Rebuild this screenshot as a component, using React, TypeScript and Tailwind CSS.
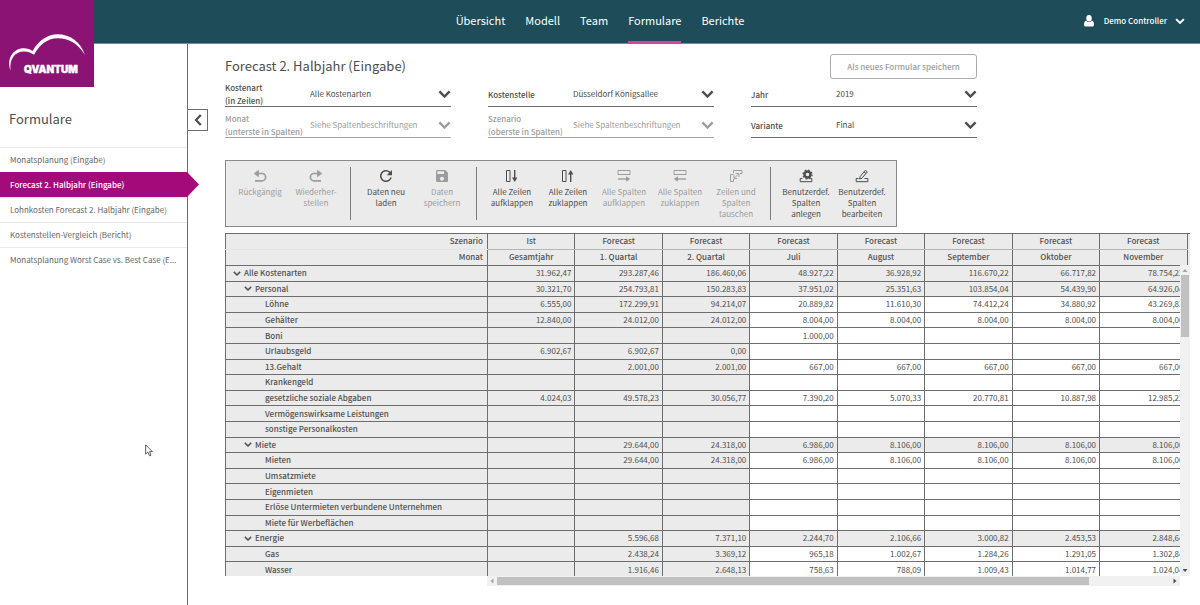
import React from 'react';
import { MdRefresh, MdSave } from 'react-icons/md';

type Chevron = { className?: string; width?: number };

function ChevronDown({ className = '', width = 2.6 }: Chevron) {
  return (
    <svg viewBox="0 0 14 9" className={className} fill="none" stroke="currentColor" strokeWidth={width} aria-hidden="true">
      <path d="M1.500 1.500 L7 7 L12.500 1.500" />
    </svg>
  );
}

function Logo() {
  return (
    <a href="#" aria-label="QVANTUM" className="relative z-10 block h-[87px] w-[94px] shrink-0 bg-[#8a1373]">
      <svg viewBox="0 0 94 87" className="h-full w-full" aria-hidden="true">
        <path
          fill="#fff"
          d="M10.500 70.500 C6 58 14 48 24 48.300 C27.500 48.400 30 49.300 32.500 51 C39 40 48 34.300 57.500 34.300 C70 34.300 81 42 84.800 54.800 C78 43.500 68.500 38.500 58 38.300 C48 38.200 40 44 34 54.800 C30 52.500 27.500 51.500 24 51.600 C14.500 51.700 9.500 59 10.500 70.500 Z"
        />
        <text
          x="51"
          y="73"
          fill="#fff"
          stroke="#fff"
          strokeWidth="0.400"
          textAnchor="middle"
          fontFamily="Inter, sans-serif"
          fontWeight="900"
          fontSize="10"
        >
          QVANTUM
        </text>
      </svg>
    </a>
  );
}

const navItems = ['Übersicht', 'Modell', 'Team', 'Formulare', 'Berichte'];

function Header() {
  return (
    <header className="grid h-11 grid-cols-[1fr_auto_1fr] border-b border-[#6f8f98] bg-[#1e4c59] text-white">
      <Logo />
      <nav className="flex gap-5 text-[11px] leading-[41px]">
        {navItems.map((item) => (
          <a
            key={item}
            href="#"
            className={
              item === 'Formulare' ? 'h-11 border-b-3 border-[#c9499c]' : 'h-11 border-b-3 border-transparent'
            }
          >
            {item}
          </a>
        ))}
      </nav>
      <button type="button" className="flex h-[42px] items-center justify-self-end pr-[15px] text-[8px] font-medium">
        <svg viewBox="0 0 10 12" className="mr-2.5 h-3 w-2.5" fill="currentColor" aria-hidden="true">
          <ellipse cx="5" cy="3.300" rx="2.700" ry="3.200" />
          <path d="M2.300 5.600 C3.500 7.600 6.500 7.600 7.700 5.600 C9.300 6.200 10 7.500 10 9.500 C10 11 9.300 11.500 8.300 11.500 H1.700 C0.700 11.500 0 11 0 9.500 C0 7.500 0.700 6.200 2.300 5.600 Z" />
        </svg>
        Demo Controller
        <ChevronDown className="ml-2 w-2.5" />
      </button>
    </header>
  );
}

const forms = [
  'Monatsplanung (Eingabe)',
  'Forecast 2. Halbjahr (Eingabe)',
  'Lohnkosten Forecast 2. Halbjahr (Eingabe)',
  'Kostenstellen-Vergleich (Bericht)',
  'Monatsplanung Worst Case vs. Best Case (E...',
];

function Sidebar() {
  return (
    <aside className="w-[188px] shrink-0 border-r border-[#6e6e6e] pt-[63px]">
      <h2 className="pb-4 pl-[9px] text-[13px] leading-6 text-[#4d4d4d]">Formulare</h2>
      <ul className="text-[8px] leading-6">
        {forms.map((form, i) =>
          i === 1 ? (
            <li key={form} className="relative h-[25px] bg-[#a30b7b] pl-2.5 font-medium text-white">
              <a href="#" aria-current="page" className="block leading-[25px]">
                {form}
              </a>
              <svg viewBox="0 0 12 25" className="absolute top-0 left-full h-[25px] w-3" aria-hidden="true">
                <path d="M0 0 L12 12.500 L0 25 Z" fill="#a30b7b" />
              </svg>
            </li>
          ) : (
            <li key={form} className="h-[25px] border-t border-[#e9e9e9] pl-2.5 text-[#666]">
              <a href="#" className="block whitespace-nowrap">
                {form}
              </a>
            </li>
          ),
        )}
      </ul>
    </aside>
  );
}

type Filter = { id: string; label: string; note?: string; value: string; disabled?: boolean };

const filters: Filter[] = [
  { id: 'kostenart', label: 'Kostenart', note: '(in Zeilen)', value: 'Alle Kostenarten' },
  { id: 'kostenstelle', label: 'Kostenstelle', value: 'Düsseldorf Königsallee' },
  { id: 'jahr', label: 'Jahr', value: '2019' },
  { id: 'monat', label: 'Monat', note: '(unterste in Spalten)', value: 'Siehe Spaltenbeschriftungen', disabled: true },
  { id: 'szenario', label: 'Szenario', note: '(oberste in Spalten)', value: 'Siehe Spaltenbeschriftungen', disabled: true },
  { id: 'variante', label: 'Variante', value: 'Final' },
];

function FilterField({ id, label, note, value, disabled }: Filter) {
  return (
    <div
      className={
        disabled
          ? 'relative flex h-[25px] items-center border-b border-[#a5a5a5] text-[#9c9c9c]'
          : 'relative flex h-[25px] items-center border-b border-[#6e6e6e] text-[#4d4d4d]'
      }
    >
      <label htmlFor={id} className="w-[85px] shrink-0 text-[8px] leading-[13px] font-medium">
        {label}
        {note && <span className="block whitespace-nowrap">{note}</span>}
      </label>
      <select
        id={id}
        disabled={disabled}
        defaultValue={value}
        className="h-5 min-w-0 flex-1 appearance-none bg-transparent text-[8px] opacity-100"
      >
        <option>{value}</option>
      </select>
      <ChevronDown className="pointer-events-none absolute right-0 w-[13px]" />
    </div>
  );
}

type Tool = { lines: string[]; icon: React.ReactNode; disabled?: boolean };

function Svg({ children }: { children: React.ReactNode }) {
  return (
    <svg viewBox="0 0 14 14" className="h-3.5 w-3.5" fill="none" stroke="currentColor" strokeWidth="1" aria-hidden="true">
      {children}
    </svg>
  );
}

const toolGroups: Tool[][] = [
  [
    {
      lines: ['Rückgängig'],
      disabled: true,
      icon: (
        <Svg>
          <path d="M4 4.500 H9 A3.600 3.600 0 0 1 9 11.800 H2" strokeWidth="1.700" />
          <path d="M5.800 0.800 V8.200 L0.800 4.500 Z" fill="currentColor" stroke="none" />
        </Svg>
      ),
    },
    {
      lines: ['Wiederher-', 'stellen'],
      disabled: true,
      icon: (
        <Svg>
          <path d="M10 4.500 H5 A3.600 3.600 0 0 0 5 11.800 H12" strokeWidth="1.700" />
          <path d="M8.200 0.800 V8.200 L13.200 4.500 Z" fill="currentColor" stroke="none" />
        </Svg>
      ),
    },
  ],
  [
    { lines: ['Daten neu', 'laden'], icon: <MdRefresh className="-m-0.5 h-[18px] w-[18px]" /> },
    { lines: ['Daten', 'speichern'], disabled: true, icon: <MdSave className="-m-px h-4 w-4" /> },
  ],
  [
    {
      lines: ['Alle Zeilen', 'aufklappen'],
      icon: (
        <Svg>
          <path d="M1.500 1.500 H5 V12.500 H1.500 Z" />
          <path d="M9.700 1 V10" strokeWidth="1.400" />
          <path d="M7 8.500 H12.400 L9.700 13 Z" fill="currentColor" stroke="none" />
        </Svg>
      ),
    },
    {
      lines: ['Alle Zeilen', 'zuklappen'],
      icon: (
        <Svg>
          <path d="M1.500 1.500 H5 V12.500 H1.500 Z" />
          <path d="M9.700 4 V13" strokeWidth="1.400" />
          <path d="M7 5.500 H12.400 L9.700 1 Z" fill="currentColor" stroke="none" />
        </Svg>
      ),
    },
    {
      lines: ['Alle Spalten', 'aufklappen'],
      disabled: true,
      icon: (
        <Svg>
          <path d="M1 1.500 H13 V5.500 H1 Z" />
          <path d="M1 10 H10" strokeWidth="1.400" />
          <path d="M9 7.300 V12.700 L13.300 10 Z" fill="currentColor" stroke="none" />
        </Svg>
      ),
    },
    {
      lines: ['Alle Spalten', 'zuklappen'],
      disabled: true,
      icon: (
        <Svg>
          <path d="M1 1.500 H13 V5.500 H1 Z" />
          <path d="M4 10 H13" strokeWidth="1.400" />
          <path d="M5 7.300 V12.700 L0.700 10 Z" fill="currentColor" stroke="none" />
        </Svg>
      ),
    },
    {
      lines: ['Zeilen und', 'Spalten', 'tauschen'],
      disabled: true,
      icon: (
        <Svg>
          <path d="M4.500 4 V1.500 H13 V4.500 H11 M1.500 5.500 H4.500 M1.500 5.500 V12.500 H4.500 V10" />
          <path d="M5.500 9 L9.500 5 M6.500 4.500 H10 V8 M5 6 V9.500 H8" strokeWidth="0.900" />
        </Svg>
      ),
    },
  ],
  [
    {
      lines: ['Benutzerdef.', 'Spalten', 'anlegen'],
      icon: (
        <Svg>
          <path d="M3.500 9.500 H1.200 V12.700 H12.800 V9.500 H11.500" />
          <circle cx="8.500" cy="5.500" r="3" strokeWidth="2.400" />
          <circle cx="8.500" cy="5.500" r="4.500" strokeWidth="1.200" strokeDasharray="1.770 1.764" />
        </Svg>
      ),
    },
    {
      lines: ['Benutzerdef.', 'Spalten', 'bearbeiten'],
      icon: (
        <Svg>
          <path d="M3.500 9.500 H1.200 V12.700 H12.800 V9.500 H9.500" />
          <path d="M4.500 10 L5.200 7.500 L10.300 1.300 L12.300 2.900 L7 9.200 Z M9 3 L11 4.600" />
        </Svg>
      ),
    },
  ],
];

function Toolbar() {
  return (
    <div
      role="toolbar"
      aria-label="Formular"
      className="mt-[22px] flex h-[67px] w-fit border border-[#8a8a8a] bg-[#ebebeb] px-1.5 py-1.5"
    >
      {toolGroups.map((group, g) => (
        <div key={g} className={g === 0 ? 'flex' : 'ml-1.5 flex border-l border-[#7d7d7d] pl-[7px]'}>
          {group.map((tool) => (
            <button
              key={tool.lines.join(' ')}
              type="button"
              disabled={tool.disabled}
              className={
                tool.disabled
                  ? 'flex w-14 flex-col items-center pt-0.5 text-[8px] leading-[11px] text-[#9c9c9c]'
                  : 'flex w-14 flex-col items-center pt-0.5 text-[8px] leading-[11px] text-[#4d4d4d]'
              }
            >
              {tool.icon}
              <span className="mt-[3px]">
                {tool.lines.map((line) => (
                  <span key={line} className="block whitespace-nowrap">
                    {line}
                  </span>
                ))}
              </span>
            </button>
          ))}
        </div>
      ))}
    </div>
  );
}

const columns = [
  ['Ist', 'Gesamtjahr'],
  ['Forecast', '1. Quartal'],
  ['Forecast', '2. Quartal'],
  ['Forecast', 'Juli'],
  ['Forecast', 'August'],
  ['Forecast', 'September'],
  ['Forecast', 'Oktober'],
  ['Forecast', 'November'],
];

type Row = { name: string; level: 0 | 1 | 2; values: string[] };

const rows: Row[] = [
  { name: 'Alle Kostenarten', level: 0, values: ['31.962,47', '293.287,46', '186.460,06', '48.927,22', '36.928,92', '116.670,22', '66.717,82', '78.754,22'] },
  { name: 'Personal', level: 1, values: ['30.321,70', '254.793,81', '150.283,83', '37.951,02', '25.351,63', '103.854,04', '54.439,90', '64.926,04'] },
  { name: 'Löhne', level: 2, values: ['6.555,00', '172.299,91', '94.214,07', '20.889,82', '11.610,30', '74.412,24', '34.880,92', '43.269,82'] },
  { name: 'Gehälter', level: 2, values: ['12.840,00', '24.012,00', '24.012,00', '8.004,00', '8.004,00', '8.004,00', '8.004,00', '8.004,00'] },
  { name: 'Boni', level: 2, values: ['', '', '', '1.000,00', '', '', '', ''] },
  { name: 'Urlaubsgeld', level: 2, values: ['6.902,67', '6.902,67', '0,00', '', '', '', '', ''] },
  { name: '13.Gehalt', level: 2, values: ['', '2.001,00', '2.001,00', '667,00', '667,00', '667,00', '667,00', '667,00'] },
  { name: 'Krankengeld', level: 2, values: ['', '', '', '', '', '', '', ''] },
  { name: 'gesetzliche soziale Abgaben', level: 2, values: ['4.024,03', '49.578,23', '30.056,77', '7.390,20', '5.070,33', '20.770,81', '10.887,98', '12.985,22'] },
  { name: 'Vermögenswirksame Leistungen', level: 2, values: ['', '', '', '', '', '', '', ''] },
  { name: 'sonstige Personalkosten', level: 2, values: ['', '', '', '', '', '', '', ''] },
  { name: 'Miete', level: 1, values: ['', '29.644,00', '24.318,00', '6.986,00', '8.106,00', '8.106,00', '8.106,00', '8.106,00'] },
  { name: 'Mieten', level: 2, values: ['', '29.644,00', '24.318,00', '6.986,00', '8.106,00', '8.106,00', '8.106,00', '8.106,00'] },
  { name: 'Umsatzmiete', level: 2, values: ['', '', '', '', '', '', '', ''] },
  { name: 'Eigenmieten', level: 2, values: ['', '', '', '', '', '', '', ''] },
  { name: 'Erlöse Untermieten verbundene Unternehmen', level: 2, values: ['', '', '', '', '', '', '', ''] },
  { name: 'Miete für Werbeflächen', level: 2, values: ['', '', '', '', '', '', '', ''] },
  { name: 'Energie', level: 1, values: ['', '5.596,68', '7.371,10', '2.244,70', '2.106,66', '3.000,82', '2.453,53', '2.848,64'] },
  { name: 'Gas', level: 2, values: ['', '2.438,24', '3.369,12', '965,18', '1.002,67', '1.284,26', '1.291,05', '1.302,84'] },
  { name: 'Wasser', level: 2, values: ['', '1.916,46', '2.648,13', '758,63', '788,09', '1.009,43', '1.014,77', '1.024,04'] },
];

const indent = ['pl-[7px]', 'pl-[18px]', 'pl-[39px]'];

function DataGrid() {
  return (
    <div className="mt-1.5">
      <div className="relative h-[343px] overflow-hidden">
        <table className="h-[345px] w-full table-fixed border-collapse text-[8px] leading-[12px] text-[#505050]">
          <colgroup>
            <col className="w-[262px]" />
            {columns.map((_, i) => (
              <col key={i} />
            ))}
            <col className="w-[3px]" />
          </colgroup>
          <thead className="bg-[#ebebeb] font-medium">
            {['Szenario', 'Monat'].map((dimension, d) => (
              <tr key={dimension} className={d === 0 ? 'h-4 border-t border-[#6e6e6e]' : 'h-4 border-b border-[#6e6e6e]'}>
                <th
                  scope="row"
                  className={
                    d === 0
                      ? 'border-x border-b border-x-[#6e6e6e] border-b-[#e4e4e4] p-0 pr-1 pb-px text-right font-medium'
                      : 'border-x border-x-[#6e6e6e] p-0 pr-1 pb-px text-right font-medium'
                  }
                >
                  {dimension}
                </th>
                {columns.map((column, i) => (
                  <th
                    key={i}
                    scope="col"
                    className={
                      d === 0
                        ? 'border-x border-b border-x-[#6e6e6e] border-b-[#b5b5b5] p-0 pb-px text-center font-medium'
                        : 'border-x border-x-[#6e6e6e] p-0 pb-px text-center font-medium'
                    }
                  >
                    {column[d]}
                  </th>
                ))}
                <td className="p-0" />
              </tr>
            ))}
          </thead>
          <tbody>
            {rows.map((row) => (
              <tr key={row.name} className="border-b border-[#6e6e6e]">
                <th scope="row" className="border-x border-[#6e6e6e] bg-[#ebebeb] p-0 text-left font-medium whitespace-nowrap">
                  <span className={`flex items-center ${indent[row.level]}`}>
                    {row.level < 2 && (
                      <button type="button" aria-label={`${row.name} zuklappen`} className="mr-[3px] w-2">
                        <ChevronDown className="w-2" />
                      </button>
                    )}
                    {row.name}
                  </span>
                </th>
                {row.values.map((value, i) => (
                  <td
                    key={i}
                    className={
                      row.level < 2 || i < 3
                        ? 'border-x border-[#6e6e6e] bg-[#ebebeb] p-0 pr-[3px] text-right'
                        : 'border-x border-[#6e6e6e] bg-white p-0 pr-[3px] text-right'
                    }
                  >
                    {value}
                  </td>
                ))}
                <td className="p-0" />
              </tr>
            ))}
          </tbody>
        </table>
        <div className="absolute top-8 right-0 bottom-0 flex w-2.5 flex-col items-center bg-[#f1f1f1]">
          <svg viewBox="0 0 10 10" className="h-2.5 w-2.5 shrink-0" aria-hidden="true">
            <path d="M2.500 7 L5 4 L7.500 7 Z" fill="#a3a3a3" />
          </svg>
          <div className="h-[62px] w-2 bg-[#c1c1c1]" />
          <svg viewBox="0 0 10 10" className="mt-auto h-2.5 w-2.5 shrink-0" aria-hidden="true">
            <path d="M2.500 3 L5 6 L7.500 3 Z" fill="#505050" />
          </svg>
        </div>
      </div>
      <div className="mr-2.5 ml-[262px] flex h-2.5 items-center bg-[#f1f1f1]">
        <svg viewBox="0 0 10 10" className="h-2.5 w-2.5 shrink-0" aria-hidden="true">
          <path d="M6.500 2.500 L3.500 5 L6.500 7.500 Z" fill="#a3a3a3" />
        </svg>
        <div className="flex-1">
          <div className="h-2 w-[88%] bg-[#c1c1c1]" />
        </div>
        <svg viewBox="0 0 10 10" className="h-2.5 w-2.5 shrink-0" aria-hidden="true">
          <path d="M3.500 2.500 L6.500 5 L3.500 7.500 Z" fill="#505050" />
        </svg>
      </div>
    </div>
  );
}

export default function App() {
  return (
    <div className="flex min-h-screen flex-col bg-white font-['Noto_Sans_CJK_SC','Noto_Sans',sans-serif]">
      <Header />
      <div className="flex flex-1">
        <Sidebar />
        <button
          type="button"
          aria-label="Seitenleiste einklappen"
          className="mt-[65px] flex h-[22px] w-5 shrink-0 items-center justify-center border border-l-0 border-[#6e6e6e] bg-white text-[#4d4d4d]"
        >
          <svg viewBox="0 0 8 12" className="h-3 w-2" fill="none" stroke="currentColor" strokeWidth="2.200" aria-hidden="true">
            <path d="M6.800 1 L2 6 L6.800 11" />
          </svg>
        </button>
        <main className="min-w-0 flex-1 pt-2.5 pr-2.5 pl-[17px]">
          <div className="max-w-[752px]">
            <div className="flex h-[25px] items-center justify-between">
              <h1 className="pb-0.5 text-[13px] leading-6 text-[#4d4d4d]">Forecast 2. Halbjahr (Eingabe)</h1>
              <button
                type="button"
                disabled
                className="h-[25px] w-[147px] rounded-[3px] border border-[#ababab] text-[8px] font-medium text-[#9c9c9c]"
              >
                Als neues Formular speichern
              </button>
            </div>
            <div className="mt-[3px] grid grid-cols-3 gap-x-[37px] gap-y-1.5">
              {filters.map((filter) => (
                <FilterField key={filter.id} {...filter} />
              ))}
            </div>
          </div>
          <Toolbar />
          <DataGrid />
        </main>
      </div>
      <svg viewBox="0 0 12 19" className="pointer-events-none absolute top-[444px] left-[145px] h-[13px] w-2" aria-hidden="true">
        <path d="M1 1 V15 L4.300 12 L6.800 17.500 L9 16.500 L6.700 11.200 H11 Z" fill="#fff" stroke="#333" strokeWidth="1.200" />
      </svg>
    </div>
  );
}
